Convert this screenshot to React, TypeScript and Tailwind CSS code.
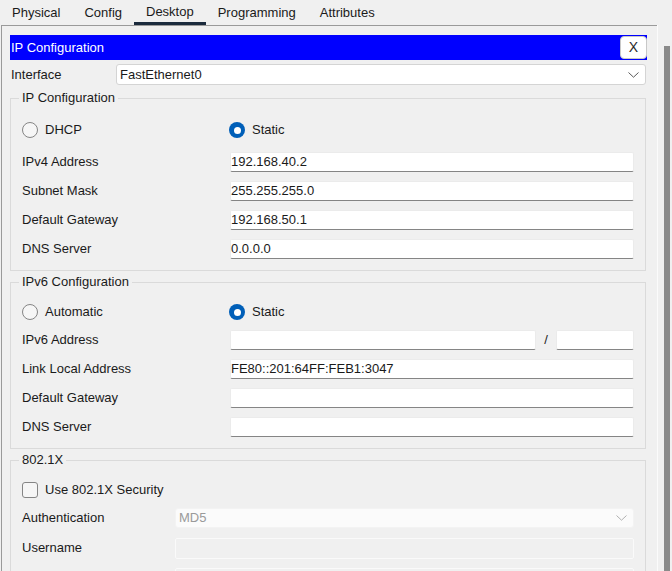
import React from 'react';

const tabs = ['Physical', 'Config', 'Desktop', 'Programming', 'Attributes'];

const Chevron = ({ color = '#5a5a5a' }: { color?: string }) => (
    <svg width="11" height="6" viewBox="0 0 11 6" className="shrink-0">
        <polyline points="0.5,0.5 5.5,5.2 10.5,0.5" fill="none" stroke={color} strokeWidth="1" />
    </svg>
);

const Radio = ({ checked }: { checked?: boolean }) =>
    checked ? (
        <span className="w-4 h-4 rounded-full bg-[#005fb8] flex items-center justify-center shrink-0">
            <span className="w-[7px] h-[7px] rounded-full bg-white" />
        </span>
    ) : (
        <span className="w-4 h-4 rounded-full border border-[#858585] bg-[#f6f6f6] shrink-0" />
    );

const TextBox = ({ value = '', className = '' }: { value?: string; className?: string }) => (
    <div
        className={`h-5 bg-white border border-[#ebebeb] border-b-[#858585] rounded-[2px] flex items-center text-[13px] text-[#1a1a1a] ${className}`}
    >
        {value}
    </div>
);

const Row = ({ label, children, labelW = 'w-[208px]' }: { label: string; children: React.ReactNode; labelW?: string }) => (
    <div className="flex items-center h-5">
        <span className={`${labelW} shrink-0`}>{label}</span>
        {children}
    </div>
);

const Group = ({ title, className = '', children }: { title: string; className?: string; children: React.ReactNode }) => (
    <fieldset className={`border border-[#dadada] px-[8px] ${className}`}>
        <legend className="px-[3px] leading-[16px]">{title}</legend>
        <div className="px-[3px]">{children}</div>
    </fieldset>
);

export default function App() {
    return (
        <div
            className="w-[672px] h-[571px] overflow-hidden bg-[#f0f0f0] text-[13px] text-[#1a1a1a]"
            style={{ fontFamily: '"Liberation Sans", Arial, sans-serif' }}
        >
            {/* tab bar */}
            <div className="h-[25px] flex">
                {tabs.map((t) => (
                    <div
                        key={t}
                        className={`h-full px-3 flex items-center ${
                            t === 'Desktop' ? 'border-b-[3px] border-[#1b2b3d] pt-[2px]' : 'pt-[1px]'
                        }`}
                    >
                        {t}
                    </div>
                ))}
            </div>

            <div className="flex ml-[1px] h-[546px]">
                {/* main panel */}
                <div className="w-[656px] border-t border-l border-[#9a9a9a] pt-[9px] pl-[8px] pr-[10px]">
                    <div className="h-[25px] bg-[#0000ff] flex items-center justify-between">
                        <span className="text-white pl-[1px]">IP Configuration</span>
                        <div className="w-[27px] h-[23px] bg-white border border-[#c8c8c8] rounded-[4px] flex items-center justify-center text-[14px] text-[#2a2a2a]">
                            X
                        </div>
                    </div>

                    <div className="mt-[4px] flex items-center h-[21px] pr-[1px]">
                        <span className="w-[106px] pl-[1px] shrink-0">Interface</span>
                        <div className="flex-1 h-[21px] bg-white border border-[#d4d4d4] rounded-[3px] flex items-center justify-between pl-[3px] pr-[6px]">
                            <span>FastEthernet0</span>
                            <Chevron />
                        </div>
                    </div>

                    <Group title="IP Configuration" className="mt-[5px] pb-[11px] mr-[1px]">
                        <div className="mt-[14px] flex items-center h-5">
                            <div className="w-[207px] flex items-center gap-[7px]">
                                <Radio />
                                <span>DHCP</span>
                            </div>
                            <div className="flex items-center gap-[7px]">
                                <Radio checked />
                                <span>Static</span>
                            </div>
                        </div>
                        <div className="mt-[12px] flex flex-col gap-[9px]">
                            <Row label="IPv4 Address">
                                <TextBox value="192.168.40.2" className="flex-1" />
                            </Row>
                            <Row label="Subnet Mask">
                                <TextBox value="255.255.255.0" className="flex-1" />
                            </Row>
                            <Row label="Default Gateway">
                                <TextBox value="192.168.50.1" className="flex-1" />
                            </Row>
                            <Row label="DNS Server">
                                <TextBox value="0.0.0.0" className="flex-1" />
                            </Row>
                        </div>
                    </Group>

                    <Group title="IPv6 Configuration" className="mt-[3px] pb-[11px] mr-[1px]">
                        <div className="mt-[12px] flex items-center h-5">
                            <div className="w-[207px] flex items-center gap-[7px]">
                                <Radio />
                                <span>Automatic</span>
                            </div>
                            <div className="flex items-center gap-[7px]">
                                <Radio checked />
                                <span>Static</span>
                            </div>
                        </div>
                        <div className="mt-[8px] flex flex-col gap-[9px]">
                            <Row label="IPv6 Address">
                                <TextBox className="flex-1" />
                                <span className="w-5 text-center">/</span>
                                <TextBox className="w-[78px]" />
                            </Row>
                            <Row label="Link Local Address">
                                <TextBox value="FE80::201:64FF:FEB1:3047" className="flex-1" />
                            </Row>
                            <Row label="Default Gateway">
                                <TextBox className="flex-1" />
                            </Row>
                            <Row label="DNS Server">
                                <TextBox className="flex-1" />
                            </Row>
                        </div>
                    </Group>

                    <Group title="802.1X" className="mt-[3px] pb-[11px] mr-[1px]">
                        <div className="mt-[12px] flex items-center h-5 gap-[7px]">
                            <span className="w-4 h-4 rounded-[3px] border border-[#858585] bg-[#f6f6f6]" />
                            <span>Use 802.1X Security</span>
                        </div>
                        <div className="mt-[8px] flex flex-col gap-[10px]">
                            <Row label="Authentication" labelW="w-[153px]">
                                <div className="flex-1 h-5 bg-[#fbfbfb] border border-[#f3f3f3] rounded-[3px] flex items-center justify-between pl-[3px] pr-[6px] text-[#9a9a9a]">
                                    <span>MD5</span>
                                    <Chevron color="#b0b0b0" />
                                </div>
                            </Row>
                            <Row label="Username" labelW="w-[153px]">
                                <div className="flex-1 h-[21px] bg-[#f0f0f0] border border-[#fafafa] rounded-[2px]" />
                            </Row>
                            <div className="flex h-5">
                                <span className="w-[153px] shrink-0" />
                                <div className="flex-1 h-[21px] bg-[#f0f0f0] border border-[#fafafa] rounded-[2px]" />
                            </div>
                        </div>
                    </Group>
                </div>

                {/* scrollbar */}
                <div className="flex-1 border-l border-[#fbfbfb] pt-[21px] pl-[6px]">
                    <div className="w-[6px] h-full bg-[#8a8a8a]" />
                </div>
            </div>
        </div>
    );
}
